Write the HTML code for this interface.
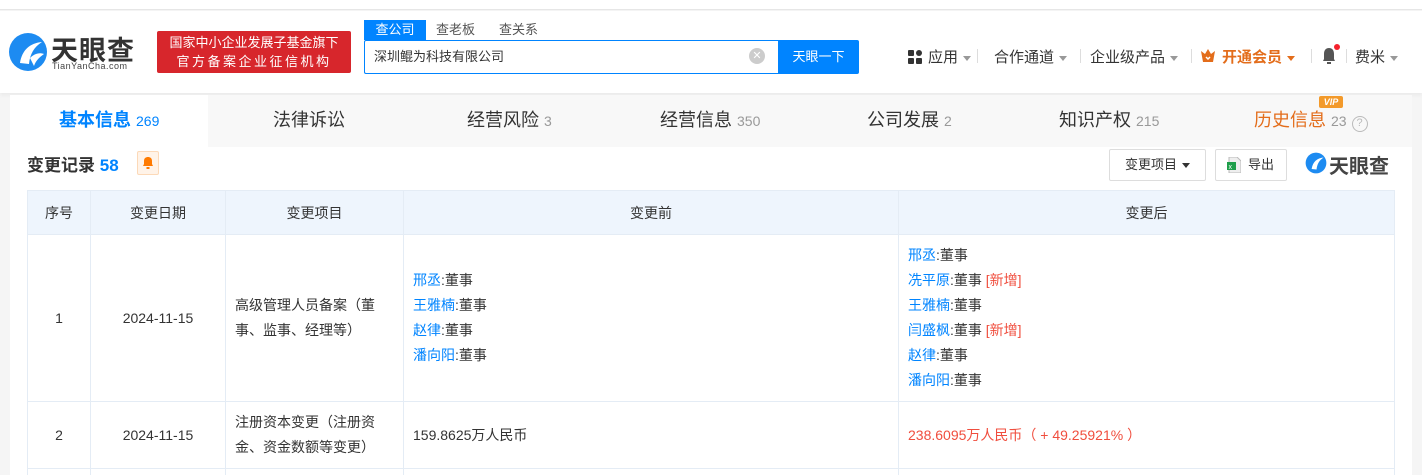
<!DOCTYPE html>
<html><head><meta charset="utf-8"><style>
*{margin:0;padding:0;box-sizing:border-box}
html,body{width:1422px;height:475px;overflow:hidden}
body{background:#f5f5f5;font-family:"Liberation Sans","Noto Sans CJK SC",sans-serif;color:#333;font-size:14px;position:relative}
.abs{position:absolute}
.top{left:0;top:0;width:1422px;height:10px;background:#fff;border-bottom:1px solid #e6e6e6}
.hdr{left:0;top:11px;width:1422px;height:82px;background:#fff;box-shadow:0 2px 4px rgba(0,0,0,.05)}
.nav span{position:absolute;top:46px;font-size:15px;color:#333}
.tri{display:inline-block;width:0;height:0;border-left:4px solid transparent;border-right:4px solid transparent;border-top:5px solid #999;vertical-align:middle;margin-left:5px}
.sep{position:absolute;top:49px;width:1px;height:14px;background:#ddd}
.tabs{left:10px;top:95px;width:1402px;height:52px;background:#f8f8f8}
.tab{position:absolute;top:106px;font-size:18px;color:#333}
.tab i{font-style:normal;font-size:14px;color:#999}
.card{left:10px;top:147px;width:1402px;height:340px;background:#fff}
table{position:absolute;left:27px;top:190px;border-collapse:collapse;font-size:14px}
td,th{border:1px solid #e4ecf5;font-weight:normal;text-align:center;vertical-align:middle}
th{background:#eef5fd;height:44px;color:#333}
td.l{text-align:left;padding-left:9px;line-height:25px}
.b{color:#0084ff}.r{color:#f04e3e}
</style></head><body>
<div class="abs top"></div>
<div class="abs hdr"></div>
<svg class="abs" style="left:8px;top:30px" width="40" height="44" viewBox="0 0 40 44"><circle cx="20" cy="22" r="19" fill="#1d8bf1"/><path d="M12 33 C14 20 22 13 34 12 C26 17 22 24 21 34 Z" fill="#fff"/><path d="M22 28 C26 24 31 22 36 24 C32 27 28 30 26 36Z" fill="#fff"/></svg>
<div class="abs" style="left:51px;top:29px;font-size:27px;font-weight:bold;color:#333;letter-spacing:1px">天眼查</div>
<div class="abs" style="left:52px;top:61px;font-size:9px;color:#444;letter-spacing:.5px">TianYanCha.com</div>
<div class="abs" style="left:157px;top:31px;width:194px;height:42px;background:#d7262c;border-radius:2px;color:#fff;font-size:13px;text-align:center;line-height:19px;padding-top:2px">国家中小企业发展子基金旗下<br><span style="letter-spacing:2.5px">官方备案企业征信机构</span></div>
<div class="abs" style="left:364px;top:20px;width:62px;height:20px;background:#0084ff;color:#fff;font-size:13px;text-align:center;line-height:20px">查公司</div>
<div class="abs" style="left:436px;top:20px;font-size:13px;color:#555;line-height:20px">查老板</div>
<div class="abs" style="left:499px;top:20px;font-size:13px;color:#555;line-height:20px">查关系</div>
<div class="abs" style="left:364px;top:40px;width:416px;height:34px;border:1px solid #0084ff;border-right:none;border-radius:2px 0 0 2px;font-size:13px;line-height:32px;padding-left:9px;color:#333">深圳鲲为科技有限公司</div>
<div class="abs" style="left:749px;top:48px;width:16px;height:16px;border-radius:50%;background:#ccc;color:#fff;font-size:11px;text-align:center;line-height:16px">✕</div>
<div class="abs" style="left:778px;top:40px;width:81px;height:34px;background:#0084ff;border-radius:0 2px 2px 0;color:#fff;font-size:13px;text-align:center;line-height:34px">天眼一下</div>
<div class="nav">
<svg class="abs" style="left:908px;top:50px" width="14" height="14"><rect x="0" y="0" width="6" height="6" rx="1" fill="#333"/><rect x="8" y="0" width="6" height="6" rx="3" fill="#333"/><rect x="0" y="8" width="6" height="6" rx="1" fill="#333"/><rect x="8" y="8" width="6" height="6" rx="1" fill="#333"/></svg>
<span style="left:928px">应用<i class="tri"></i></span>
<div class="sep" style="left:977px"></div>
<span style="left:994px">合作通道<i class="tri"></i></span>
<div class="sep" style="left:1080px"></div>
<span style="left:1090px">企业级产品<i class="tri"></i></span>
<div class="sep" style="left:1191px"></div>
<svg class="abs" style="left:1200px;top:48px" width="16" height="15"><path d="M1 3 L5 6 L8 1 L11 6 L15 3 L13 14 L3 14Z" fill="#e36d1b"/><path d="M6 9 L8 11 L10 9" stroke="#fff" stroke-width="1.5" fill="none"/></svg>
<span style="left:1222px;color:#e36d1b;font-weight:bold">开通会员<i class="tri" style="border-top-color:#e36d1b"></i></span>
<div class="sep" style="left:1311px"></div>
<svg class="abs" style="left:1320px;top:44px" width="20" height="22"><path d="M3 17 L4 15 L4 10 C4 6 6 4 9 4 C12 4 14 6 14 10 L14 15 L15 17Z" fill="#555"/><rect x="7" y="18" width="4" height="2" fill="#555"/><circle cx="17" cy="3" r="3" fill="#f5222d"/></svg>
<div class="sep" style="left:1346px"></div>
<span style="left:1355px">费米<i class="tri"></i></span>
</div>
<div class="abs tabs"></div>
<div class="abs" style="left:10px;top:95px;width:198px;height:52px;background:#fff"></div>
<div class="tab" style="left:59px;color:#0084ff;font-weight:bold">基本信息 <i style="color:#0084ff;font-weight:normal">269</i></div>
<div class="tab" style="left:273px">法律诉讼</div>
<div class="tab" style="left:467px">经营风险 <i>3</i></div>
<div class="tab" style="left:660px">经营信息 <i>350</i></div>
<div class="tab" style="left:867px">公司发展 <i>2</i></div>
<div class="tab" style="left:1059px">知识产权 <i>215</i></div>
<div class="tab" style="left:1254px;color:#e36d1b">历史信息 <i>23</i> <i style="display:inline-block;width:16px;height:16px;border:1.5px solid #bbb;border-radius:50%;font-size:11px;text-align:center;line-height:13px;color:#bbb">?</i></div>
<div class="abs" style="left:1319px;top:96px;width:24px;height:12px;background:#f39a2b;color:#fff;font-size:9px;font-style:italic;font-weight:bold;text-align:center;line-height:12px;border-radius:2px">VIP</div>
<div class="abs card"></div>
<div class="abs" style="left:27px;top:151px;font-size:17px;font-weight:bold;color:#333">变更记录 <span style="color:#0084ff">58</span></div>
<div class="abs" style="left:137px;top:151px;width:22px;height:24px;background:#fff3e8;border:1px solid #fcd9b8;border-radius:2px"></div>
<svg class="abs" style="left:142px;top:156px" width="12" height="13"><path d="M1 10 L2 8 L2 5 C2 2 4 1 6 1 C8 1 10 2 10 5 L10 8 L11 10Z" fill="#ff7a00"/><rect x="4.5" y="11" width="3" height="2" fill="#ff7a00"/></svg>
<div class="abs" style="left:1109px;top:149px;width:97px;height:32px;border:1px solid #ddd;border-radius:2px;font-size:13px;line-height:30px;text-align:center">变更项目<i class="tri" style="border-top-color:#333"></i></div>
<div class="abs" style="left:1215px;top:149px;width:72px;height:32px;border:1px solid #ddd;border-radius:2px;font-size:13px;line-height:30px;padding-left:32px">导出</div>
<svg class="abs" style="left:1227px;top:157px" width="14" height="16"><path d="M2 0 H10 L14 4 V16 H2Z" fill="#eee" stroke="#bbb"/><rect x="0" y="5" width="9" height="8" fill="#1e9e4a"/><text x="1.5" y="12" font-size="7" fill="#fff" font-family="Liberation Sans">x</text></svg>
<svg class="abs" style="left:1304px;top:151px" width="24" height="24" viewBox="0 0 40 44"><circle cx="20" cy="22" r="19" fill="#1d8bf1"/><path d="M12 33 C14 20 22 13 34 12 C26 17 22 24 21 34 Z" fill="#fff"/></svg>
<div class="abs" style="left:1329px;top:150px;font-size:20px;font-weight:bold;color:#444">天眼查</div>
<table>
<tr><th style="width:63px">序号</th><th style="width:135px">变更日期</th><th style="width:178px">变更项目</th><th style="width:495px">变更前</th><th style="width:496px">变更后</th></tr>
<tr style="height:167px"><td>1</td><td>2024-11-15</td><td class="l" style="padding-right:12px">高级管理人员备案（董事、监事、经理等）</td>
<td class="l"><span class="b">邢丞</span>:董事<br><span class="b">王雅楠</span>:董事<br><span class="b">赵律</span>:董事<br><span class="b">潘向阳</span>:董事</td>
<td class="l"><span class="b">邢丞</span>:董事<br><span class="b">冼平原</span>:董事 <span class="r">[新增]</span><br><span class="b">王雅楠</span>:董事<br><span class="b">闫盛枫</span>:董事 <span class="r">[新增]</span><br><span class="b">赵律</span>:董事<br><span class="b">潘向阳</span>:董事</td></tr>
<tr style="height:67px"><td>2</td><td>2024-11-15</td><td class="l" style="padding-right:12px">注册资本变更（注册资金、资金数额等变更）</td><td class="l">159.8625万人民币</td><td class="l r">238.6095万人民币（ + 49.25921% ）</td></tr>
<tr style="height:20px"><td></td><td></td><td></td><td></td><td></td></tr>
</table>
</body></html>
